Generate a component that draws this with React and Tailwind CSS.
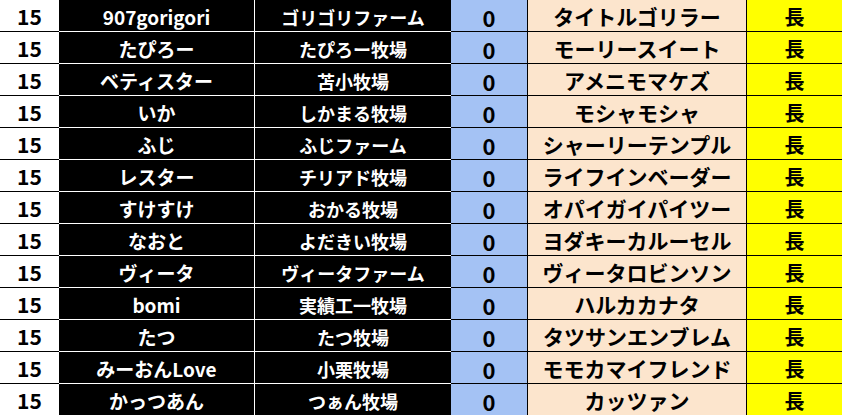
import React from 'react';

const rows = [
  ['907gorigori', 'ゴリゴリファーム', 'タイトルゴリラー'],
  ['たぴろー', 'たぴろー牧場', 'モーリースイート'],
  ['ベティスター', '苫小牧場', 'アメニモマケズ'],
  ['いか', 'しかまる牧場', 'モシャモシャ'],
  ['ふじ', 'ふじファーム', 'シャーリーテンプル'],
  ['レスター', 'チリアド牧場', 'ライフインベーダー'],
  ['すけすけ', 'おかる牧場', 'オパイガイパイツー'],
  ['なおと', 'よだきい牧場', 'ヨダキーカルーセル'],
  ['ヴィータ', 'ヴィータファーム', 'ヴィータロビンソン'],
  ['bomi', '実績工一牧場', 'ハルカカナタ'],
  ['たつ', 'たつ牧場', 'タツサンエンブレム'],
  ['みーおんLove', '小栗牧場', 'モモカマイフレンド'],
  ['かっつあん', 'つぁん牧場', 'カッツァン'],
];

const App = () => {
  return (
    <div className="w-[842px] h-[415px] overflow-hidden bg-white font-bold font-['Noto_Sans_CJK_JP','Noto_Sans',sans-serif] leading-none">
      {rows.map(([name, farm, horse], i) => (
        <div key={i} className="flex h-8">
          <div className="w-[59px] pt-[2px] flex items-center justify-center border-b border-black text-black text-[21px]">
            15
          </div>
          <div className="w-[196px] pt-[2px] flex items-center justify-center bg-black text-white border-b border-r border-white text-[19px]">
            {name}
          </div>
          <div className="w-[196px] pt-[2px] flex items-center justify-center bg-black text-white border-b border-white text-[18px]">
            {farm}
          </div>
          <div className="w-[77px] pt-[2px] flex items-center justify-center bg-[#a4c2f4] text-black border-b border-r border-black text-[22px]">
            0
          </div>
          <div className="w-[219px] pt-[2px] flex items-center justify-center bg-[#fce5cd] text-black border-b border-r border-black text-[21px]">
            {horse}
          </div>
          <div className="w-[95px] pt-[2px] flex items-center justify-center bg-[#ffff00] text-black border-b border-black text-[20px]">
            長
          </div>
        </div>
      ))}
    </div>
  );
};

export default App;
